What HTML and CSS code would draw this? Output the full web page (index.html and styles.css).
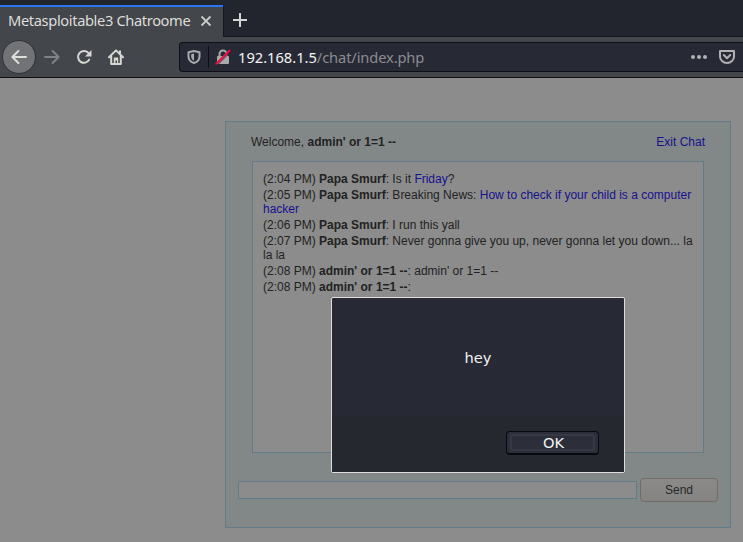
FILE: index.html
```html
<!DOCTYPE html>
<html lang="en">
<head>
<meta charset="utf-8">
<title>Metasploitable3 Chatroome</title>
<link rel="stylesheet" href="styles.css">
</head>
<body>
<header class="browser">
  <div class="tabs">
    <div class="tab">
      <span class="tab-title">Metasploitable3 Chatroome</span>
      <svg class="tab-close" width="12" height="12" viewBox="0 0 12 12"><path d="M1.5 1.5l9 9M10.5 1.5l-9 9"/></svg>
    </div>
    <div class="tab-rest">
      <svg width="14" height="14" viewBox="0 0 14 14"><path d="M7 0v14M0 7h14"/></svg>
    </div>
  </div>
  <div class="toolbar">
    <div class="back"><svg width="16" height="16" viewBox="0 0 16 16"><path d="M15 8H1.8M7.4 2L1.4 8l6 6"/></svg></div>
    <svg class="forward" width="16" height="16" viewBox="0 0 16 16"><path d="M1 8h13.2M8.6 2l6 6-6 6"/></svg>
    <svg class="reload" width="16" height="16" viewBox="0 0 16 16"><path class="line" d="M12.2 3.8A5.900 5.900 0 1 0 13.200 10.600"/><path class="fill" d="M15.500 1v6.500H9z"/></svg>
    <svg class="home" width="16" height="16" viewBox="0 0 16 16"><path class="line" d="M1 8.2L8 1.4l7 6.800M3.200 7v8h9.600V7"/><path class="fill" d="M5.800 14.500V8.500h4.400v6H9v-3H7.500v3z"/><path class="fill" d="M11 1.500h2v4l-2-2z"/></svg>
    <div class="urlbar">
      <svg class="shield" width="14" height="14" viewBox="0 0 14 14"><path class="line" d="M7 1L12.500 2.300V6.400C12.500 9.700 10 12 7 13 4 12 1.500 9.700 1.500 6.400V2.300z"/><path class="fill" d="M7 3.500v7.200C5.200 9.800 4.200 8.300 4.200 6.500V4.200z"/></svg>
      <span class="divider"></span>
      <svg class="lock" width="16" height="16" viewBox="0 0 16 16"><path class="line" d="M4.500 8V5a3.500 3.500 0 0 1 7 0v3"/><rect class="fill" x="2" y="7" width="12" height="8" rx="1"/><path class="gap" d="M2.200 16.200L16 2.400"/><path class="slash" d="M1.300 14.700L14.300 1.700"/></svg>
      <span class="url"><b>192.168.1.5</b>/chat/index.php</span>
      <svg class="dots" width="16" height="4" viewBox="0 0 16 4"><circle cx="2" cy="2" r="2"/><circle cx="8" cy="2" r="2"/><circle cx="14" cy="2" r="2"/></svg>
      <svg class="pocket" width="16" height="14" viewBox="0 0 16 14"><path d="M1 1h14v5.500a7 6.500 0 0 1-14 0zM4.800 5L8 8.200 11.200 5"/></svg>
    </div>
  </div>
</header>
<main class="chat">
  <div class="menu"><p>Welcome, <b>admin' or 1=1 --</b></p><a>Exit Chat</a></div>
  <div class="messages">
    <div class="msg">(2:04 PM) <b>Papa Smurf</b>: Is it <a>Friday</a>?</div>
    <div class="msg">(2:05 PM) <b>Papa Smurf</b>: Breaking News: <a>How to check if your child is a computer hacker</a></div>
    <div class="msg">(2:06 PM) <b>Papa Smurf</b>: I run this yall</div>
    <div class="msg">(2:07 PM) <b>Papa Smurf</b>: Never gonna give you up, never gonna let you down... la la la</div>
    <div class="msg">(2:08 PM) <b>admin' or 1=1 --</b>: admin' or 1=1 --</div>
    <div class="msg">(2:08 PM) <b>admin' or 1=1 --</b>:</div>
  </div>
  <form class="composer"><input class="field" type="text" aria-label="Message"><button class="send" type="button">Send</button></form>
</main>
<div class="dialog" role="alertdialog">
  <div class="dialog-text">hey</div>
  <div class="dialog-actions"><button class="ok" type="button"><span>OK</span></button></div>
</div>
</body>
</html>
```

FILE: styles.css
```css
* { box-sizing: border-box; }
body {
  margin: 0;
  width: 743px;
  height: 542px;
  overflow: hidden;
  position: relative;
  background: #8c8c8c;
  color: #222;
  font: 12px/14px "Liberation Sans", Arial, sans-serif;
}
svg { display: block; flex: none; fill: none; }
.browser {
  height: 78px;
  background: #43464b;
  border-bottom: 1px solid #0e0f14;
  font-family: "Noto Sans", sans-serif;
}
.tabs { display: flex; height: 37px; background: #22252e; padding-top: 5px; }
.tab {
  display: flex;
  align-items: center;
  width: 223px;
  padding: 0 11px 0 8px;
  border-top: 2px solid #2a76ee;
  background: #43464b;
}
.tab-title { width: 192px; font-size: 14.67px; letter-spacing: -0.37px; line-height: 20px; color: #deddda; white-space: nowrap; margin-bottom: 4px; }
.tab-close { stroke: #c9c9c8; stroke-width: 1.8; margin-bottom: 2px; }
.tab-rest { flex: 1; border-left: 1px solid #15171d; border-bottom: 1px solid #15171d; padding: 8px 0 0 9px; }
.tab-rest svg { stroke: #d4d4d2; stroke-width: 2; }
.toolbar { display: flex; align-items: center; height: 40px; padding-left: 2px; }
.back {
  display: flex;
  align-items: center;
  justify-content: center;
  width: 34px;
  height: 34px;
  border: 1px solid #2d3036;
  border-radius: 50%;
  background: #727377;
}
.back svg { stroke: #deddda; stroke-width: 2; stroke-linecap: round; stroke-linejoin: round; }
.forward { margin-left: 8px; stroke: #818285; stroke-width: 2; stroke-linecap: round; stroke-linejoin: round; }
.reload { margin-left: 16px; stroke: #d6d6d3; }
.home { margin-left: 16px; stroke: #d6d6d3; }
.toolbar .line { stroke-width: 2; stroke-linejoin: round; stroke-linecap: round; }
.reload .fill, .home .fill { fill: #d6d6d3; stroke: none; }
.urlbar {
  display: flex;
  align-items: center;
  flex: 1;
  height: 30px;
  margin-left: 55px;
  border: 1px solid #0e0f14;
  border-right: 0;
  border-radius: 4px 0 0 4px;
  background: #272a35;
}
.shield { margin-left: 7px; stroke: #a9aaac; }
.shield .fill { fill: #a9aaac; stroke: none; }
.divider { width: 1px; height: 22px; margin-left: 7px; background: #0e0f14; }
.lock { margin-left: 6px; stroke: #a9aaac; }
.lock .fill { fill: #a9aaac; stroke: none; }
.lock .gap { stroke: #272a35; stroke-width: 1; }
.toolbar .lock .slash { stroke: #f2083d; stroke-width: 2; stroke-linecap: round; }
.url { flex: 1; margin-left: 7px; font-size: 14.67px; line-height: 20px; letter-spacing: -0.12px; color: #8b8c8f; white-space: nowrap; }
.url b { font-weight: 400; letter-spacing: 0; color: #f5f5f3; }
.dots { fill: #b1b1b3; }
.pocket { margin: 0 8px 0 12px; stroke: #b1b1b3; stroke-width: 2; stroke-linecap: round; stroke-linejoin: round; }
.chat {
  width: 506px;
  height: 407px;
  margin: 43px 0 0 225px;
  border: 1px solid #627b88;
  background: #828888;
}
.menu { display: flex; justify-content: space-between; padding: 13px 25px 12px; }
.menu p { margin: 0; }
a { color: #15128c; }
.messages {
  width: 452px;
  height: 292px;
  margin-left: 26px;
  padding: 10px;
  border: 1px solid #627b88;
  background: #8c8c8c;
}
.msg { margin-bottom: 2px; }
.composer { display: flex; align-items: center; height: 24px; margin: 25px 0 0 12px; gap: 3px; }
.field { width: 399px; height: 18px; padding: 0; border: 1px solid #627b88; background: #8c8c8c; }
.send {
  width: 78px;
  height: 24px;
  padding: 0;
  border: 1px solid #736b68;
  border-radius: 4px;
  background: linear-gradient(#8b8a89, #868483);
  color: #25282a;
  font: inherit;
}
.dialog {
  position: absolute;
  left: 331px;
  top: 297px;
  width: 294px;
  height: 176px;
  border: 1px solid #deddda;
  border-radius: 2px;
  background: #272a34;
  color: #f3f3f1;
  font: 14.67px/18px "DejaVu Sans", sans-serif;
}
.dialog-text { height: 119px; padding-top: 51px; text-align: center; }
.dialog-actions {
  display: flex;
  justify-content: flex-end;
  height: 55px;
  padding: 13px 25px 0 0;
  border-top: 1px solid #23262d;
  background: #25282f;
}
.ok {
  width: 93px;
  height: 24px;
  padding: 2px 3px;
  border: 1px solid #08090c;
  border-bottom-width: 2px;
  border-radius: 4px;
  background: #2c2e3a;
  color: #f3f3f1;
  font: 14.67px/13px "DejaVu Sans", sans-serif;
}
.ok span { display: block; height: 17px; border: 2px solid #363844; border-radius: 2px; padding-left: 2px; }
```
